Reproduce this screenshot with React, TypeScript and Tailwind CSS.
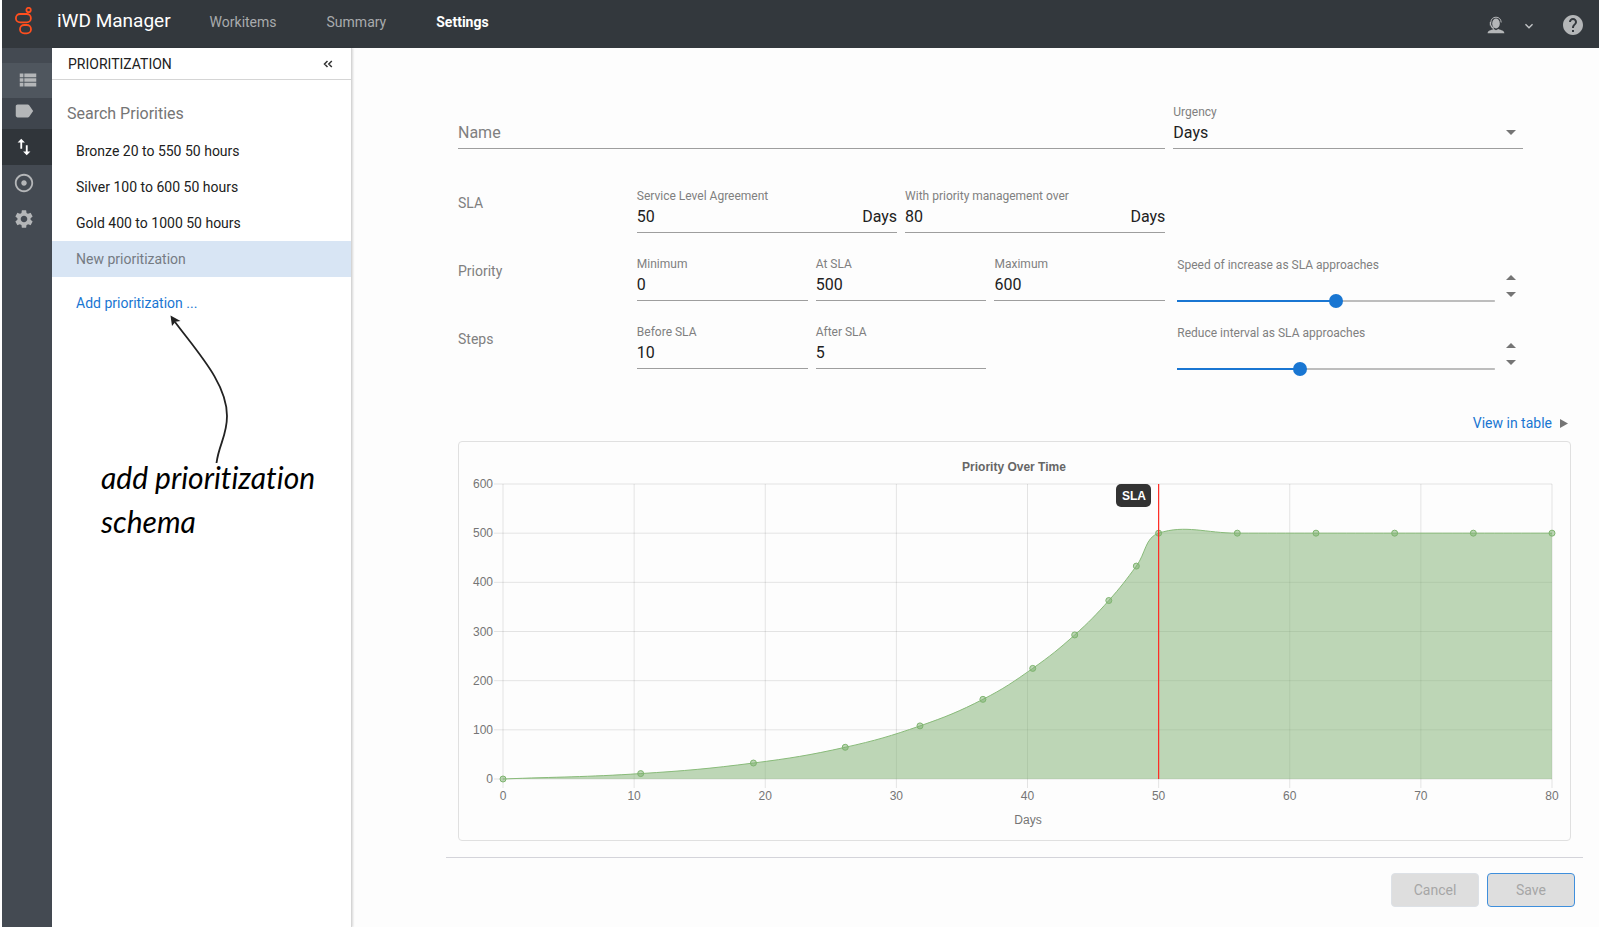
import React, { useState } from 'react';
import {
  MdAdjust,
  MdExpandMore,
  MdHelp,
  MdImportExport,
  MdLabel,
  MdSettings,
  MdViewList,
} from 'react-icons/md';

const priorities = [
  'Bronze 20 to 550 50 hours',
  'Silver 100 to 600 50 hours',
  'Gold 400 to 1000 50 hours',
];

const points = [
  [0, 0], [10.5, 11], [19.1, 32.5], [26.1, 64.5], [31.8, 108], [36.6, 162],
  [40.4, 225], [43.6, 293], [46.2, 363], [48.3, 433], [50, 500], [56, 500],
  [62, 500], [68, 500], [74, 500], [80, 500],
];

const Logo = () => (
  <svg width="18" height="28" viewBox="0 0 18 28" fill="none" stroke="#ff4f1f" strokeWidth="1.8" aria-hidden="true">
    <circle cx="13.6" cy="3" r="2.2" />
    <rect x="0.9" y="7" width="15" height="8.4" rx="4.2" />
    <rect x="5" y="18" width="11" height="8.4" rx="4.2" />
  </svg>
);

const AgentIcon = () => (
  <svg width="18" height="18" viewBox="0 0 18 18" aria-hidden="true">
    <ellipse cx="9" cy="7.5" rx="3.8" ry="5" fill="#b4b6b8" />
    <path d="M3.8 6.5C4 3 6 1.2 9 1.2s5 1.8 5.2 5.3" fill="none" stroke="#b4b6b8" strokeWidth="1" />
    <path d="M3.5 6v3.5M4 9.5c.6 1.7 1.5 2.5 2.8 3" fill="none" stroke="#b4b6b8" strokeWidth="1.4" />
    <path d="M.6 17.3c.3-2.6 3-3 6.2-4.2L9 14.3l2.2-1.2c3.200 1.200 5.900 1.600 6.200 4.200z" fill="#b4b6b8" />
  </svg>
);

const Triangle = ({ className }: { className: string }) => (
  <svg width="10" height="5" viewBox="0 0 10 5" className={className} aria-hidden="true">
    <path d="M0 0h10L5 5z" fill="#757575" />
  </svg>
);

const Header = () => (
  <header className="flex h-12 items-center bg-[#33383d] pl-[13px] pr-3.5 text-[#a9abad]">
    <div className="flex h-12 items-start pt-[7px]">
      <Logo />
    </div>
    <h1 className="ml-6 pb-1.5 text-[19px] leading-6 text-white">iWD Manager</h1>
    <nav className="ml-[39px] flex gap-[50px] pb-1 text-sm leading-5">
      <a href="#workitems">Workitems</a>
      <a href="#summary">Summary</a>
      <a href="#settings" className="font-bold text-white">Settings</a>
    </nav>
    <div className="ml-auto flex items-center pt-0.5">
      <button type="button" aria-label="User" className="mr-4"><AgentIcon /></button>
      <button type="button" aria-label="User menu" className="mr-6 pt-0.5"><MdExpandMore size={16} color="#c4c6c8" /></button>
      <button type="button" aria-label="Help"><MdHelp size={24} color="#b4b6b8" /></button>
    </div>
  </header>
);

const IconRail = () => (
  <nav className="flex w-[50px] flex-col bg-[#444a52] pt-[15px] text-[#b4b6b8]">
    <button type="button" aria-label="List" className="flex h-[35px] items-center justify-center bg-[#4f565e] pb-0.5 pl-0.5"><MdViewList size={22} /></button>
    <button type="button" aria-label="Labels" className="flex h-[31px] items-start justify-center bg-[#3f454d] pr-1.5 pt-0.5"><MdLabel size={22} /></button>
    <button type="button" aria-label="Prioritization" className="flex h-9 items-center justify-center bg-[#30353a] pr-1.5 text-white"><MdImportExport size={22} /></button>
    <button type="button" aria-label="Targets" className="flex h-9 items-center justify-center pr-1.5"><MdAdjust size={22} /></button>
    <button type="button" aria-label="Options" className="flex h-9 items-center justify-center pr-1.5"><MdSettings size={22} /></button>
  </nav>
);

const PriorityPanel = () => (
  <aside className="relative w-[300px] border-r border-[#d5d5d5] bg-white text-sm text-[#212121] shadow-[1px_0_2px_rgba(0,0,0,0.15)]">
    <div className="flex h-8 items-center justify-between border-b border-[#d5d5d5] pl-4 pr-[18px]">
      <h2>PRIORITIZATION</h2>
      <button type="button" aria-label="Collapse">
        <svg width="10" height="8" viewBox="0 0 10 8" fill="none" stroke="#333" strokeWidth="1.5" aria-hidden="true">
          <path d="M4.5 1l-3 3 3 3M8.800 1l-3 3 3 3" />
        </svg>
      </button>
    </div>
    <input
      type="text"
      aria-label="Search Priorities"
      placeholder="Search Priorities"
      className="mt-[19px] block h-7 w-full pl-[15px] text-base outline-none placeholder:text-[#757575]"
    />
    <ul className="mt-1.5">
      {priorities.map((name) => (
        <li key={name}>
          <button type="button" className="h-9 w-full pl-6 text-left">{name}</button>
        </li>
      ))}
      <li>
        <button type="button" className="h-9 w-full bg-[#d8e5f4] pl-6 text-left text-[#757b83]">New prioritization</button>
      </li>
    </ul>
    <a href="#add" className="ml-6 mt-4 inline-block leading-5 text-[#1976d2]">Add prioritization ...</a>

    {/* hint note over the empty part of the panel */}
    <svg width="64" height="152" viewBox="0 0 64 152" className="absolute left-[117px] top-[266px]" fill="none" aria-hidden="true">
      <path d="M6 8C30 40 58 70 58 102c0 20-8 28-10.5 47" stroke="#222" strokeWidth="1.8" />
      <path d="M1.500 1.500l10 5.500-5 .8L3 12z" fill="#222" />
    </svg>
    <p className="absolute left-[49px] top-[407px] w-60 font-['Lato'] text-[30px] italic leading-[44px] text-black [font-variant-ligatures:none]">
      add prioritization schema
    </p>
  </aside>
);

interface FieldProps {
  id: string;
  label?: string;
  initial?: string;
  placeholder?: string;
  suffix?: string;
  className?: string;
}

const Field = ({ id, label, initial = '', placeholder, suffix, className = '' }: FieldProps) => {
  const [value, setValue] = useState(initial);
  return (
    <div className={`min-w-0 border-b border-[#9e9e9e] pb-[3px] ${className}`}>
      <label htmlFor={id} className="block h-4 text-xs leading-4 text-[#808080]">{label}</label>
      <div className="flex h-[25px] items-center text-base text-[#212121]">
        <input
          id={id}
          type="text"
          aria-label={label || placeholder}
          placeholder={placeholder}
          value={value}
          onChange={(e) => setValue(e.target.value)}
          className="w-full min-w-0 outline-none placeholder:text-[#808080]"
        />
        {suffix && <span>{suffix}</span>}
      </div>
    </div>
  );
};

const Slider = ({ id, label, initial }: { id: string; label: string; initial: number }) => {
  const [value, setValue] = useState(initial);
  return (
    <div className="col-span-2 -mb-2 flex gap-2 px-1">
      <div className="min-w-0 flex-1">
        <label htmlFor={id} className="block text-xs leading-[18px] text-[#808080]">{label}</label>
        <input
          id={id}
          type="range"
          value={value}
          onChange={(e) => setValue(Number(e.target.value))}
          style={{ background: `linear-gradient(to right, #1976d2 ${value}%, #bdbdbd ${value}%) center / 100% 2px no-repeat` }}
          className="mt-5 block h-3.5 w-full appearance-none [&::-webkit-slider-thumb]:h-3.5 [&::-webkit-slider-thumb]:w-3.5 [&::-webkit-slider-thumb]:appearance-none [&::-webkit-slider-thumb]:rounded-full [&::-webkit-slider-thumb]:bg-[#1976d2]"
        />
      </div>
      <div className="flex w-4 flex-col pt-[13px]">
        <button type="button" aria-label={`${label}: more`} onClick={() => setValue(value + 1)} className="flex h-[17px] items-center justify-center">
          <Triangle className="rotate-180" />
        </button>
        <button type="button" aria-label={`${label}: less`} onClick={() => setValue(value - 1)} className="flex h-[17px] items-center justify-center">
          <Triangle className="" />
        </button>
      </div>
    </div>
  );
};

const RowLabel = ({ children }: { children: React.ReactNode }) => (
  <span className="pt-[5px] text-sm leading-5 text-[#808080]">{children}</span>
);

const PriorityForm = () => (
  <form className="pl-3 pr-[60px]">
    <div className="grid grid-cols-6 gap-x-2">
      <Field id="name" placeholder="Name" className="col-span-4" />
      <div className="relative col-span-2 border-b border-[#9e9e9e] pb-[3px]">
        <label htmlFor="urgency" className="block h-4 text-xs leading-4 text-[#808080]">Urgency</label>
        <select id="urgency" defaultValue="Days" className="block h-[25px] w-full appearance-none text-base text-[#212121] outline-none">
          <option>Days</option>
          <option>Hours</option>
          <option>Minutes</option>
        </select>
        <Triangle className="pointer-events-none absolute right-[7px] top-[26px]" />
      </div>
    </div>

    <div className="mt-[39px] grid grid-cols-6 gap-x-2 gap-y-[23px]">
      <RowLabel>SLA</RowLabel>
      <div className="col-span-3 flex gap-2">
        <Field id="sla" label="Service Level Agreement" initial="50" suffix="Days" className="flex-1" />
        <Field id="over" label="With priority management over" initial="80" suffix="Days" className="flex-1" />
      </div>
      <div className="col-span-2" />

      <RowLabel>Priority</RowLabel>
      <Field id="minimum" label="Minimum" initial="0" />
      <Field id="at-sla" label="At SLA" initial="500" />
      <Field id="maximum" label="Maximum" initial="600" />
      <Slider id="speed" label="Speed of increase as SLA approaches" initial={50} />

      <RowLabel>Steps</RowLabel>
      <Field id="before-sla" label="Before SLA" initial="10" />
      <Field id="after-sla" label="After SLA" initial="5" />
      <div />
      <Slider id="interval" label="Reduce interval as SLA approaches" initial={38} />
    </div>
  </form>
);

const LEFT = 44;
const RIGHT = 1093;
const TOP = 42;
const BOTTOM = 337;
const scaleX = (v: number) => LEFT + (v / 80) * (RIGHT - LEFT);
const scaleY = (v: number) => BOTTOM - (v / 600) * (BOTTOM - TOP);

// smooth curve through the points, control points weighted by segment length
const curvePath = (data: number[][]) => {
  const pts = data.map(([x, y]) => [scaleX(x), scaleY(y)]);
  const controls = pts.map((cur, i) => {
    const prev = pts[i - 1] || cur;
    const next = pts[i + 1] || cur;
    const before = Math.hypot(cur[0] - prev[0], cur[1] - prev[1]);
    const after = Math.hypot(next[0] - cur[0], next[1] - cur[1]);
    const a = (0.4 * before) / (before + after);
    const b = (0.4 * after) / (before + after);
    const dx = next[0] - prev[0];
    const dy = next[1] - prev[1];
    return [cur[0] - a * dx, cur[1] - a * dy, cur[0] + b * dx, cur[1] + b * dy];
  });
  let path = `M${pts[0][0]} ${pts[0][1]}`;
  for (let i = 1; i < pts.length; i++) {
    path += ` C${controls[i - 1][2]} ${controls[i - 1][3]} ${controls[i][0]} ${controls[i][1]} ${pts[i][0]} ${pts[i][1]}`;
  }
  return path;
};

const PriorityChart = () => {
  const line = curvePath(points);
  return (
    <div className="rounded border border-[#e0e0e0]">
      <svg viewBox="0 0 1111 398" className="block w-full text-xs" fontFamily="'Liberation Sans', Arial, sans-serif" role="img" aria-label="Priority Over Time">
        <text x="555" y="29" textAnchor="middle" fontWeight="bold" fill="#666">Priority Over Time</text>
        {[0, 100, 200, 300, 400, 500, 600].map((v) => (
          <g key={v}>
            <line x1={LEFT - 9} x2={RIGHT} y1={scaleY(v)} y2={scaleY(v)} stroke="#000" strokeOpacity="0.1" />
            <text x={LEFT - 10} y={scaleY(v) + 4} textAnchor="end" fill="#757575">{v}</text>
          </g>
        ))}
        {[0, 10, 20, 30, 40, 50, 60, 70, 80].map((v) => (
          <g key={v}>
            <line x1={scaleX(v)} x2={scaleX(v)} y1={TOP} y2={BOTTOM + 9} stroke="#000" strokeOpacity="0.1" />
            <text x={scaleX(v)} y={BOTTOM + 21} textAnchor="middle" fill="#757575">{v}</text>
          </g>
        ))}
        <text x="569" y="382" textAnchor="middle" fill="#757575">Days</text>
        <path d={`${line} V${BOTTOM} H${LEFT} Z`} fill="#7daf6f" fillOpacity="0.5" />
        <path d={line} fill="none" stroke="#89bb7a" />
        {points.map(([x, y]) => (
          <circle key={x} cx={scaleX(x)} cy={scaleY(y)} r="3" fill="#7daf6f" fillOpacity="0.5" stroke="#7fb570" />
        ))}
        <line x1={scaleX(50)} x2={scaleX(50)} y1={TOP} y2={BOTTOM} stroke="#ff2a23" strokeWidth="1.2" />
        <rect x="657" y="42" width="35" height="23" rx="5" fill="#333" />
        <text x="675" y="58" textAnchor="middle" fontWeight="bold" fill="#fff">SLA</text>
      </svg>
    </div>
  );
};

const App = () => {
  return (
    <div className="flex min-h-screen flex-col bg-white pl-0.5 font-['Roboto',sans-serif]">
      <Header />
      <div className="flex flex-1">
        <IconRail />
        <PriorityPanel />
        <main className="min-w-0 flex-1 bg-[#fdfdfd] pl-[94px] pr-4 pt-14">
          <PriorityForm />
          <section className="px-3 pt-11">
            <a href="#table" className="mb-2 flex items-center justify-end gap-2 pr-[3px] text-sm leading-5 text-[#1976d2]">
              View in table
              <svg width="8" height="9" viewBox="0 0 8 9" aria-hidden="true">
                <path d="M0 0l8 4.500L0 9z" fill="#757575" />
              </svg>
            </a>
            <PriorityChart />
          </section>
          <footer className="mt-4 flex justify-end gap-2 border-t border-[#d4d4da] pr-2 pt-[15px] text-sm text-[#a6a6a6]">
            <button type="button" className="h-[34px] w-[88px] rounded-sm border border-[#dde1e6] bg-[#dedede]">Cancel</button>
            <button type="button" className="h-[34px] w-[88px] rounded-sm border border-[#3f8fdc] bg-[#dedede]">Save</button>
          </footer>
        </main>
      </div>
    </div>
  );
};

export default App;
